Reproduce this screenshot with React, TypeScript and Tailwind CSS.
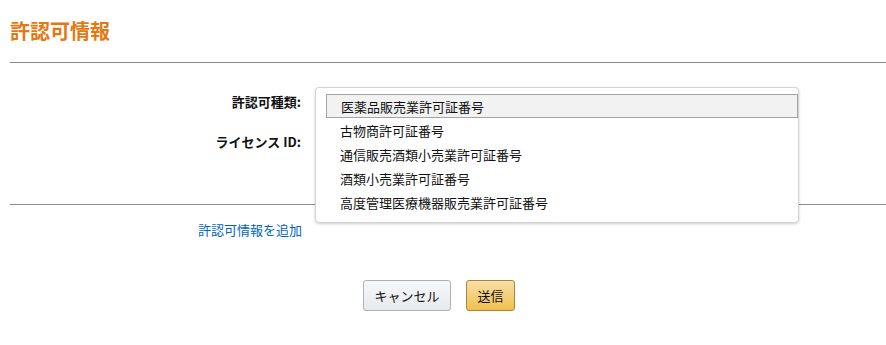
import React from "react";

const items = [
  "医薬品販売業許可証番号",
  "古物商許可証番号",
  "通信販売酒類小売業許可証番号",
  "酒類小売業許可証番号",
  "高度管理医療機器販売業許可証番号",
];

export default function App() {
  return (
    <div
      className="relative w-[886px] h-[345px] bg-white text-[13px] text-[#111]"
      style={{ fontFamily: '"Noto Sans CJK JP", "Noto Sans", sans-serif' }}
    >
      <div className="pl-[10px]">
        <div className="h-[62px] flex items-center">
          <h1 className="text-[20px] font-bold text-[#e47911] leading-none">許認可情報</h1>
        </div>
        <div className="h-px bg-[#8a8a8a]" />
        <div className="pt-[26px] flex flex-col gap-[14px]">
          <div className="flex items-center h-[26px]">
            <div className="w-[291px] text-right font-bold">許認可種類:</div>
            <div className="ml-[14px] w-[483px] h-[26px] border border-[#a6a6a6] rounded-[3px] bg-[#f0f2f2]" />
          </div>
          <div className="flex items-center h-[26px]">
            <div className="w-[291px] text-right font-bold">ライセンス ID:</div>
            <div className="ml-[14px] w-[483px] h-[26px] border border-[#a6a6a6] rounded-[3px]" />
          </div>
        </div>
        <div className="mt-[49px] h-px bg-[#8a8a8a]" />
        <div className="h-[48px] flex items-center pl-[188px]">
          <a className="text-[#0066c0] leading-none">許認可情報を追加</a>
        </div>
        <div className="mt-[27px] flex pl-[353px] gap-[15px]">
          <button className="w-[88px] h-[31px] rounded-[3px] border border-[#adb1b8] bg-gradient-to-b from-[#f7f8fa] to-[#e7e9ec] text-[13px] text-[#111]">
            キャンセル
          </button>
          <button className="w-[49px] h-[31px] rounded-[3px] border border-[#a88734] bg-gradient-to-b from-[#f7dfa5] to-[#f0c14b] text-[13px] text-[#111]">
            送信
          </button>
        </div>
      </div>

      <div className="absolute left-[315px] top-[87px] w-[484px] h-[136px] bg-white border border-[#d5d5d5] rounded-[4px] shadow-[0_1px_3px_rgba(0,0,0,0.2)] pl-[10px] pt-[6px] overflow-hidden">
        {items.map((t, i) => (
          <div
            key={t}
            className={
              "h-[24px] flex items-center pl-[14px] leading-none " +
              (i === 0 ? "bg-[#f2f2f2] border border-[#a3a3a3] pl-[13px]" : "")
            }
          >
            {t}
          </div>
        ))}
      </div>
    </div>
  );
}
